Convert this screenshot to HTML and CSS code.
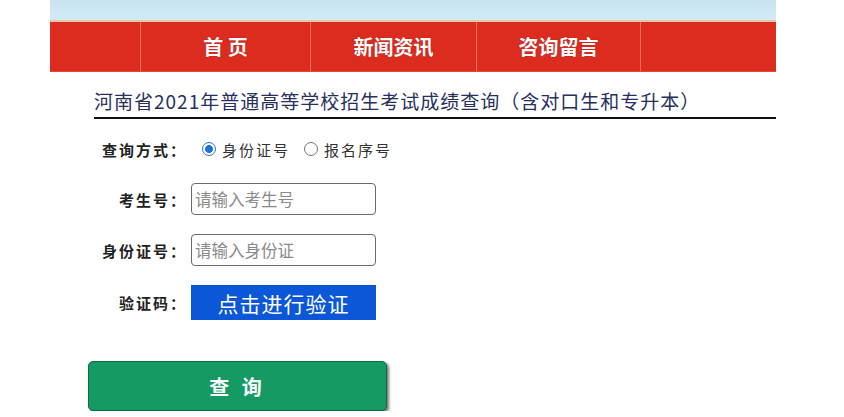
FILE: index.html
```html
<!DOCTYPE html>
<html lang="zh-CN">
<head>
<meta charset="utf-8">
<title>河南省2021年普通高等学校招生考试成绩查询</title>
<link rel="stylesheet" href="styles.css">
</head>
<body>
<div class="page">
  <div class="banner"></div>
  <nav class="nav">
    <div class="nav-cell nav-blank"></div>
    <div class="nav-cell">首 页</div>
    <div class="nav-cell">新闻资讯</div>
    <div class="nav-cell">咨询留言</div>
    <div class="nav-cell"></div>
  </nav>
  <h1 class="title">河南省2021年普通高等学校招生考试成绩查询（含对口生和专升本）</h1>
  <form class="form">
    <div class="row row-mode">
      <span class="label">查询方式：</span>
      <span class="radio checked"></span><span class="opt">身份证号</span>
      <span class="radio"></span><span class="opt">报名序号</span>
    </div>
    <div class="row">
      <span class="label">考生号：</span>
      <input class="field" type="text" placeholder="请输入考生号">
    </div>
    <div class="row">
      <span class="label">身份证号：</span>
      <input class="field" type="text" placeholder="请输入身份证">
    </div>
    <div class="row">
      <span class="label">验证码：</span>
      <button type="button" class="verify">点击进行验证</button>
    </div>
    <button type="button" class="submit">查 询</button>
  </form>
</div>
</body>
</html>
```

FILE: styles.css
```css
* { box-sizing: border-box; }
html, body { margin: 0; padding: 0; background: #fff; }
body {
  font-family: "Noto Sans CJK SC", "Noto Sans", sans-serif;
  color: #222;
}
.page {
  width: 726px;
  margin-left: 50px;
}
.banner {
  height: 22px;
  background: linear-gradient(180deg, #c7e3f1 0%, #d3eaf5 100%);
  border-bottom: 2px solid #e6c9a6;
}
.nav {
  height: 50px;
  display: grid;
  grid-template-columns: 90px 170px 166px 164px 1fr;
  background: #dc2b1f;
  border-bottom: 1px solid #e24a3c;
}
.nav-cell {
  display: flex;
  align-items: center;
  justify-content: center;
  color: #fff;
  font-size: 20px;
  font-weight: 700;
  letter-spacing: 0;
  text-shadow: 0 0 1px rgba(80, 0, 0, .5);
  border-left: 1px solid #ee6e60;
}
.nav-blank { border-left: none; }
.title {
  margin: 15px 0 0 44px;
  padding: 0 0 2px 0;
  font-size: 19px;
  font-weight: 400;
  line-height: 28px;
  letter-spacing: 1px;
  color: #26305e;
  border-bottom: 2px solid #111;
  white-space: nowrap;
}
.form {
  margin-top: 15px;
  display: flex;
  flex-direction: column;
  gap: 19px;
}
.row {
  display: flex;
  align-items: center;
  gap: 4px;
}
.row-mode { height: 30px; }
.label {
  width: 100px;
  margin-left: 37px;
  text-align: right;
  font-size: 15px;
  font-weight: 700;
  letter-spacing: 2px;
  color: #222;
  white-space: nowrap;
}
.radio {
  width: 14px;
  height: 14px;
  border-radius: 50%;
  border: 1px solid #777;
  background: #fff;
  margin-left: 11px;
  flex: none;
}
.radio + .opt { margin-left: 2px; }
.opt ~ .radio { margin-left: 10px; }
.radio.checked {
  border-color: #2d6fd6;
  background: radial-gradient(circle, #1f6fe0 0 3.6px, #fff 4.2px);
}
.opt {
  font-size: 15px;
  letter-spacing: 2px;
  color: #333;
}
.field {
  width: 185px;
  height: 32px;
  border: 1.5px solid #6a6a6a;
  border-radius: 4px;
  padding: 0 3px;
  font-family: inherit;
  font-size: 16.5px;
  color: #333;
  background: #fff;
}
.field::placeholder { color: #8a8a8a; }
.verify {
  width: 185px;
  height: 35px;
  border: none;
  background: #0b57d8;
  color: #fff;
  font-family: inherit;
  font-size: 21px;
  letter-spacing: 1px;
  padding: 0;
}
.submit {
  margin: 22px 0 0 38px;
  width: 299px;
  height: 50px;
  align-self: flex-start;
  border: 1px solid #0e6b45;
  border-radius: 5px;
  background: #149a62;
  color: #fff;
  font-family: inherit;
  font-size: 20px;
  font-weight: 700;
  letter-spacing: 4px;
  box-shadow: 2px 2px 3px rgba(0, 0, 0, .55);
}
```
